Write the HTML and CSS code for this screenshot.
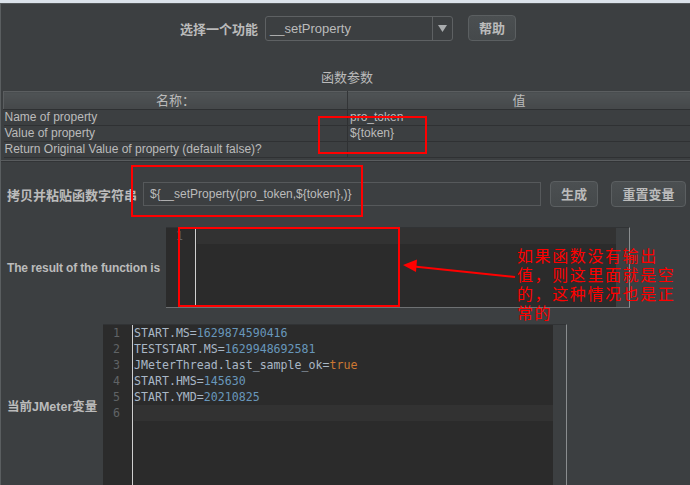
FILE: index.html
```html
<!DOCTYPE html>
<html lang="zh">
<head>
<meta charset="utf-8">
<title>函数助手</title>
<link rel="stylesheet" href="styles.css">
</head>
<body>
<div class="strip"></div>
<div class="panel">
  <div class="selector">
    <span class="label">选择一个功能</span>
    <div class="combo">
      <span class="combo-text">__setProperty</span>
      <span class="combo-arrow"><svg width="9" height="7" viewBox="0 0 9 7"><path d="M0 0H9L4.5 7Z" fill="#a9acae"/></svg></span>
    </div>
    <button class="btn btn-help">帮助</button>
  </div>
  <div class="params-title">函数参数</div>
  <table class="params">
    <thead>
      <tr><th class="col-name">名称：</th><th>值</th></tr>
    </thead>
    <tbody>
      <tr><td>Name of property</td><td class="val">pro_token</td></tr>
      <tr><td>Value of property</td><td class="val">${token}</td></tr>
      <tr><td>Return Original Value of property (default false)?</td><td class="val"></td></tr>
    </tbody>
  </table>
  <div class="sep"></div>
  <div class="row copy-row">
    <span class="label label-copy">拷贝并粘贴函数字符串</span>
    <div class="field">${__setProperty(pro_token,${token},)}</div>
    <button class="btn btn-gen">生成</button>
    <button class="btn btn-reset">重置变量</button>
  </div>
  <div class="row result-row">
    <span class="label label-en">The result of the function is</span>
    <div class="editor result-editor">
      <div class="gutter"><div class="ln">1</div></div>
      <div class="code"><div class="line current"></div></div>
      <div class="vscroll"></div>
    </div>
  </div>
  <div class="row vars-row">
    <span class="label label-vars">当前JMeter变量</span>
    <div class="editor vars-editor">
      <div class="gutter">
        <div class="ln">1</div><div class="ln">2</div><div class="ln">3</div>
        <div class="ln">4</div><div class="ln">5</div><div class="ln">6</div>
      </div>
      <div class="code">
        <div class="line">START.MS=<span class="num">1629874590416</span></div>
        <div class="line">TESTSTART.MS=<span class="num">1629948692581</span></div>
        <div class="line">JMeterThread.last_sample_ok=<span class="kw">true</span></div>
        <div class="line">START.HMS=<span class="num">145630</span></div>
        <div class="line">START.YMD=<span class="num">20210825</span></div>
        <div class="line current"></div>
      </div>
      <div class="vscroll"></div>
    </div>
  </div>
</div>
<div class="annot">
  <svg class="annot-svg" width="690" height="485" viewBox="0 0 690 485">
    <rect x="319" y="117" width="107" height="36" fill="none" stroke="#ff0000" stroke-width="2"/>
    <rect x="132" y="166" width="230" height="50" fill="none" stroke="#ff0000" stroke-width="2"/>
    <rect x="179" y="228" width="220" height="78" fill="none" stroke="#ff0000" stroke-width="2"/>
    <line x1="515" y1="277" x2="414" y2="266.5" stroke="#ff0000" stroke-width="2"/>
    <polygon points="403,265 417,259.5 416,272" fill="#ff0000"/>
  </svg>
  <div class="note">如果函数没有输出<br>值，则这里面就是空<br>的，这种情况也是正<br>常的</div>
</div>
</body>
</html>
```
FILE: styles.css
```css
html, body {
  margin: 0;
  padding: 0;
}
body {
  width: 690px;
  height: 485px;
  overflow: hidden;
  position: relative;
  background: #3c3f41;
  color: #bbbbbb;
  font-family: "Liberation Sans", "Noto Sans CJK SC", sans-serif;
  font-size: 12px;
}
.strip {
  height: 3px;
  background: #dce3eb;
}
.panel {
  height: 482px;
  box-sizing: border-box;
  border-top: 1px solid #55595b;
  border-left: 1px solid #5a5e60;
}
.label {
  font-family: "Liberation Sans", "Noto Sans CJK SC", sans-serif;
  font-weight: bold;
  font-size: 13px;
  color: #bbbbbb;
  white-space: nowrap;
  flex: none;
}
.selector {
  display: flex;
  align-items: center;
  justify-content: center;
  height: 26px;
  margin-top: 11px;
  padding-left: 5px;
}
.combo {
  display: flex;
  align-items: stretch;
  width: 188px;
  height: 25px;
  box-sizing: border-box;
  margin-left: 7px;
  border: 1px solid #5e6163;
  border-radius: 3px;
}
.combo-text {
  flex: 1;
  display: flex;
  align-items: center;
  padding-left: 4px;
  font-size: 13px;
  color: #bbbbbb;
}
.combo-arrow {
  width: 19px;
  display: flex;
  align-items: center;
  justify-content: center;
  border-left: 1px solid #5e6163;
}
.btn {
  flex: none;
  height: 26px;
  box-sizing: border-box;
  padding: 0;
  border: 1px solid #5b5f61;
  border-radius: 4px;
  background: linear-gradient(#4b4f51, #45494b);
  color: #bbbbbb;
  font-family: "Noto Sans CJK SC", sans-serif;
  font-weight: bold;
  font-size: 13px;
  line-height: 22px;
}
.btn-help {
  width: 48px;
  margin-left: 15px;
}
.params-title {
  margin-top: 28px;
  height: 17px;
  line-height: 17px;
  text-align: center;
  font-size: 13px;
  padding-left: 3px;
}
.params {
  margin-top: 5px;
  margin-left: 2px;
  width: 688px;
  border-collapse: collapse;
  table-layout: fixed;
  font-size: 12px;
}
.params th {
  height: 17px;
  padding: 0;
  font-weight: normal;
  font-size: 13px;
  color: #bbbbbb;
  background: linear-gradient(#4f5355, #45484a);
  border-top: 1px solid #5b5e60;
  border-left: 1px solid #5b5e60;
  border-right: 1px solid #333537;
  border-bottom: 1px solid #2e3032;
  line-height: 16px;
}
.params th.col-name {
  width: 343px;
}
.params td {
  height: 15px;
  padding: 0 0 0 1px;
  line-height: 15px;
  white-space: nowrap;
  overflow: hidden;
  border-bottom: 1px solid #2f3133;
  border-right: 1px solid #2f3133;
  color: #bbbbbb;
}
.params td.val {
  padding-left: 2px;
}
.sep {
  margin-top: 2px;
  height: 1px;
  background: #595c5e;
  border-bottom: 1px solid #323436;
}
.row {
  display: flex;
  align-items: center;
  padding-left: 6px;
}
.copy-row {
  margin-top: 19px;
  height: 26px;
}
.label-copy {
  width: 130px;
}
.field {
  width: 398px;
  height: 24px;
  box-sizing: border-box;
  margin-left: 6px;
  padding-left: 6px;
  border: 1px solid #56595b;
  line-height: 22px;
  font-size: 12px;
  color: #bbbbbb;
  white-space: nowrap;
}
.btn-gen {
  width: 48px;
  margin-left: 9px;
}
.btn-reset {
  width: 75px;
  margin-left: 13px;
}
.result-row {
  margin-top: 20px;
  height: 81px;
}
.label-en {
  width: 154px;
  font-size: 12px;
  letter-spacing: -0.15px;
}
.editor {
  display: flex;
  flex: none;
  width: 464px;
  box-sizing: border-box;
  background: #2b2b2b;
  border-top: 1px solid #313335;
  border-right: 1px solid #8a8d8f;
  font-family: "DejaVu Sans Mono", monospace;
  font-size: 11.6px;
  line-height: 16px;
}
.result-editor {
  height: 81px;
  margin-left: 5px;
  border-bottom: 1px solid #6e7173;
}
.vars-row {
  margin-top: 16px;
  height: 162px;
}
.label-vars {
  width: 91px;
  font-size: 12.5px;
}
.vars-editor {
  height: 162px;
  margin-left: 5px;
}
.gutter {
  width: 30px;
  flex: none;
  box-sizing: border-box;
  border-right: 1px solid #cfcfcf;
  padding-right: 12px;
  text-align: right;
  color: #606366;
}
.ln {
  height: 16px;
}
.code {
  flex: 1;
  padding-left: 1px;
  color: #a9b7c6;
}
.line {
  height: 16px;
  white-space: pre;
}
.line.current {
  background: #323232;
}
.num {
  color: #6897bb;
}
.kw {
  color: #cc7832;
}
.vscroll {
  width: 13px;
  flex: none;
  background: #3c3f41;
}
.annot {
  position: absolute;
  left: 0;
  top: 0;
  width: 690px;
  height: 485px;
  pointer-events: none;
}
.annot-svg {
  position: absolute;
  left: 0;
  top: 0;
}
.note {
  position: absolute;
  left: 517px;
  top: 246px;
  color: #ff0000;
  font-family: "Noto Sans CJK SC", sans-serif;
  font-size: 16px;
  line-height: 19px;
  letter-spacing: 1.6px;
  white-space: nowrap;
}
```
